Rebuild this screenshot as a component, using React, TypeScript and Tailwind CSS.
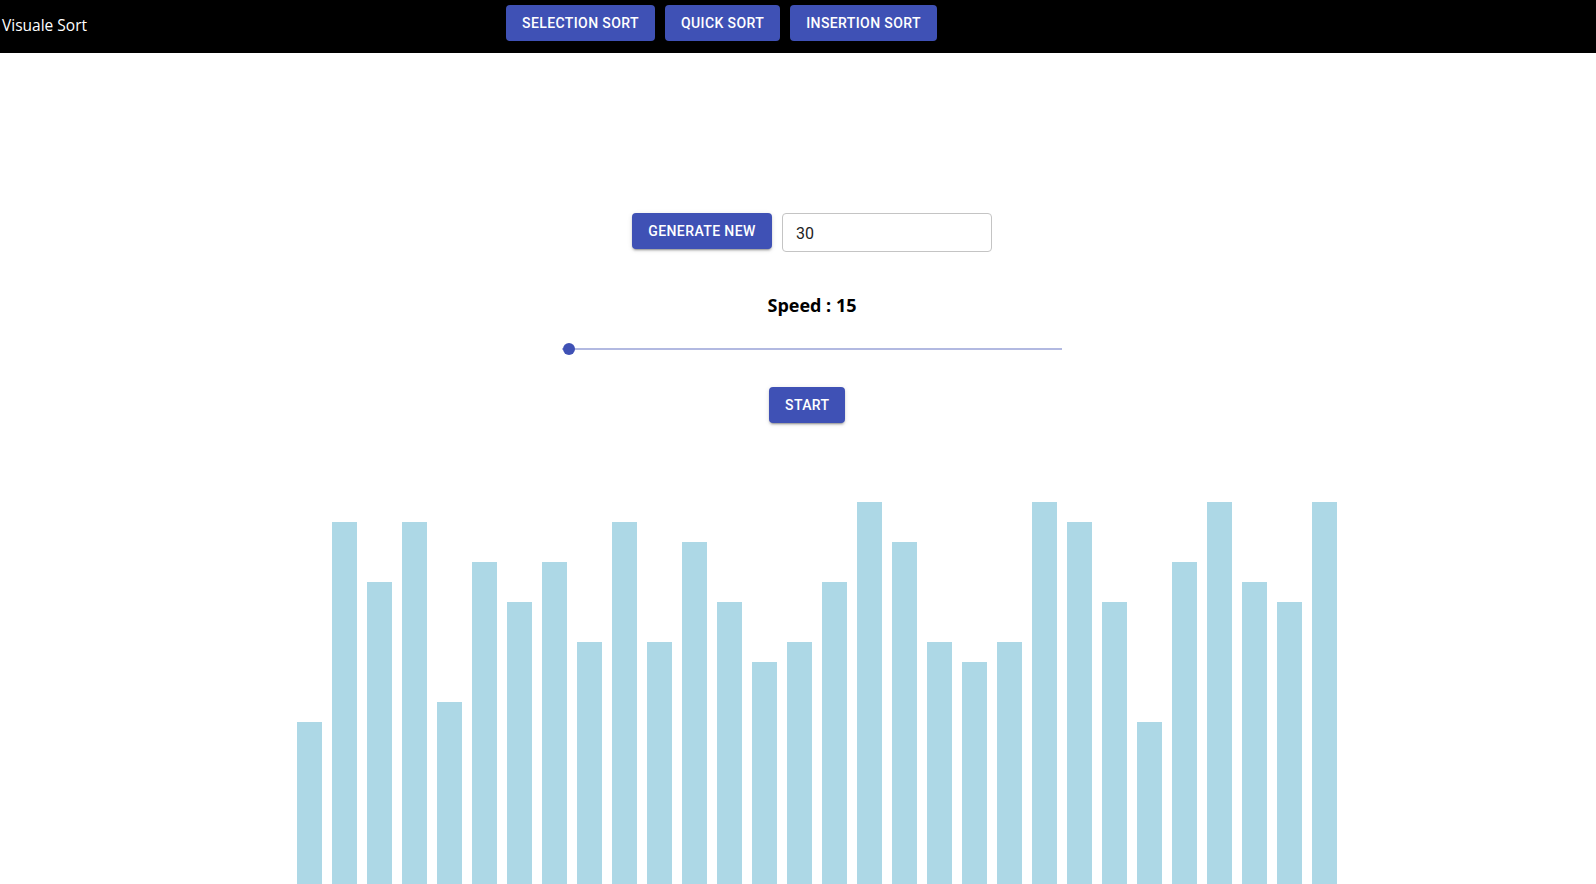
import { useState } from 'react';

const values = [9, 19, 16, 19, 10, 17, 15, 17, 13, 19, 13, 18, 15, 12, 13, 16, 20, 18, 13, 12, 13, 20, 19, 15, 9, 17, 20, 16, 15, 20];

const muiButton =
  "h-[36px] px-4 rounded-[4px] bg-[#3f51b5] text-white text-[14px] font-medium uppercase tracking-[0.4px] font-['Roboto',sans-serif] shadow-[0px_3px_1px_-2px_rgba(0,0,0,0.2),0px_2px_2px_0px_rgba(0,0,0,0.14),0px_1px_5px_0px_rgba(0,0,0,0.12)]";

export default function App() {
  const [size, setSize] = useState('30');
  const [speed] = useState(15);

  return (
    <div className="min-h-screen bg-white">
      {/* Nav */}
      <nav className="h-[53px] bg-black flex items-start">
        <span className="mt-[13px] pl-[2px] w-[506px] text-white text-[15.5px] font-['Open_Sans',sans-serif] leading-[24px]">
          Visuale Sort
        </span>
        <div className="mt-[5px] flex gap-[10px]">
          <button className={muiButton}>Selection Sort</button>
          <button className={muiButton}>Quick Sort</button>
          <button className={muiButton}>Insertion Sort</button>
        </div>
      </nav>

      {/* Controls */}
      <div className="flex flex-col items-center pl-[28px]">
        <div className="mt-[160px] flex items-start gap-[10px]">
          <button className={`${muiButton} w-[140px]`}>Generate New</button>
          <input
            value={size}
            onChange={(e) => setSize(e.target.value)}
            className="w-[210px] h-[39px] border border-[#c4c4c4] rounded-[4px] px-[13px] pt-[2px] text-[16px] text-[#222] font-['Roboto',sans-serif] outline-none"
          />
        </div>

        <p className="mt-[41px] text-[18px] leading-[24px] font-bold text-black font-['Open_Sans',sans-serif]">
          Speed : {speed}
        </p>

        <div className="mt-[26px] relative w-[500px] h-[12px] flex items-center">
          <div className="w-full h-[2px] bg-[#3f51b5]/40" />
          <div className="absolute left-[1px] w-[12px] h-[12px] rounded-full bg-[#3f51b5]" />
        </div>

        <button className={`${muiButton} mt-[32px] w-[76px] -ml-[10px]`}>Start</button>
      </div>

      {/* Bars */}
      <div className="mt-[79px] h-[400px] flex items-end gap-[10px] pl-[297px]">
        {values.map((v, i) => (
          <div key={i} className="w-[25px] bg-[#add8e6]" style={{ height: v * 20 }} />
        ))}
      </div>
    </div>
  );
}
